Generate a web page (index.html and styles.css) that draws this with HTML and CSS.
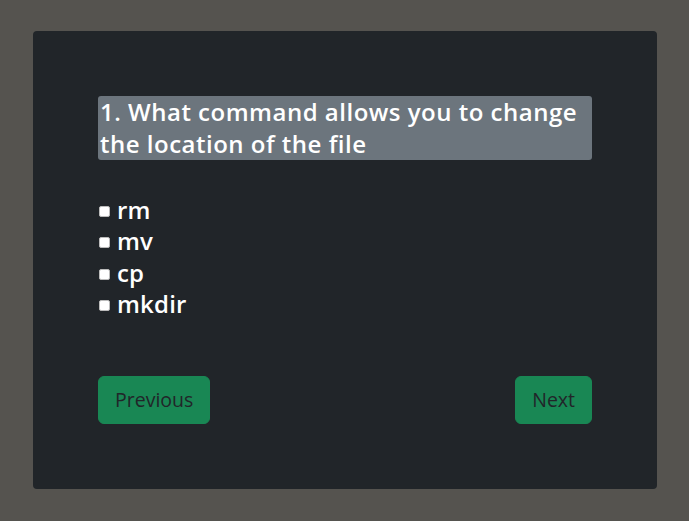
FILE: index.html
```html
<!DOCTYPE html>
<html lang="en">
<head>
<meta charset="utf-8">
<title>Quiz</title>
<link rel="stylesheet" href="styles.css">
</head>
<body>
<div class="page">
  <div class="card">
    <h2 class="question">1. What command allows you to change the location of the file</h2>
    <ul class="options">
      <li><label><input type="checkbox" class="check"><span>rm</span></label></li>
      <li><label><input type="checkbox" class="check"><span>mv</span></label></li>
      <li><label><input type="checkbox" class="check"><span>cp</span></label></li>
      <li><label><input type="checkbox" class="check"><span>mkdir</span></label></li>
    </ul>
    <div class="nav">
      <button class="btn">Previous</button>
      <button class="btn">Next</button>
    </div>
  </div>
</div>
</body>
</html>
```
FILE: styles.css
```css
html, body {
  margin: 0;
  padding: 0;
  background: #55534f;
  font-family: "Open Sans", "Noto Sans", sans-serif;
}
.page {
  padding: 31px 32px 32px 33px;
}
.card {
  background: #212529;
  border-radius: 4px;
  width: 624px;
  height: 458px;
  box-sizing: border-box;
  padding: 65px;
  display: flex;
  flex-direction: column;
}
.question {
  margin: 0;
  background: #6c757d;
  color: #fff;
  border-radius: 3px;
  font-size: 24px;
  font-weight: 600;
  letter-spacing: 0.5px;
  line-height: 32px;
  padding: 0 4px 0 2px;
}
.options {
  list-style: none;
  margin: 34px 0 0;
  padding: 0;
  color: #fff;
  font-size: 24px;
  font-weight: 600;
  letter-spacing: 0.2px;
  line-height: 31.3px;
}
.options label {
  display: flex;
  align-items: center;
  gap: 7px;
}
.check {
  appearance: none;
  -webkit-appearance: none;
  margin: 4px 0 0 1px;
  width: 11px;
  height: 11px;
  background: #fff;
  border: 1px solid #bbb;
  border-radius: 2px;
  box-sizing: border-box;
}
.nav {
  margin-top: auto;
  display: flex;
  justify-content: space-between;
}
.btn {
  background: #198754;
  color: #212529;
  border: 1px solid #198754;
  border-radius: 6px;
  font-family: inherit;
  font-size: 19.5px;
  line-height: 30px;
  padding: 8px 16px;
}
```
